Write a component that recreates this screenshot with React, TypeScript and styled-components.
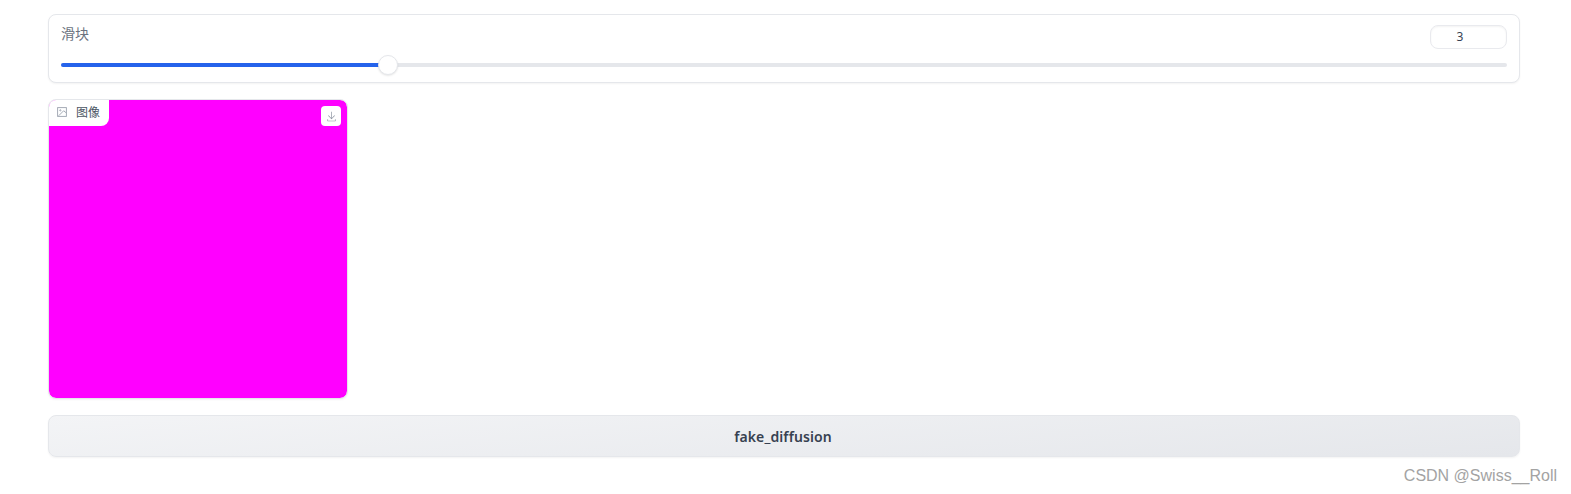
import styled, { createGlobalStyle } from "styled-components";

const GlobalStyle = createGlobalStyle`
    html, body {
        margin: 0;
        padding: 0;
        background: #ffffff;
    }
    body {
        font-family: "Noto Sans", "Noto Sans CJK SC", sans-serif;
    }
`;

function ImageIcon() {
    return (
        <svg width="10" height="10" viewBox="0 0 24 24" fill="none" stroke="#9ca3af" strokeWidth="2.2">
            <rect x="1.5" y="1.5" width="21" height="21" />
            <circle cx="8" cy="8" r="1.5" />
            <polyline points="22 14 16 9 4 21" />
        </svg>
    );
}

function DownloadIcon() {
    return (
        <svg width="11" height="11" viewBox="0 0 32 32" fill="#8b92a0">
            <path d="M26 24v4H6v-4H4v4a2 2 0 0 0 2 2h20a2 2 0 0 0 2-2v-4zm0-10l-1.41-1.41L17 20.17V2h-2v18.17l-7.59-7.58L6 14l10 10l10-10z" />
        </svg>
    );
}

export default function App() {
    const value = 3;
    const percent = 22.63;

    return (
        <Page>
            <GlobalStyle />
            <SliderPanel>
                <SliderHead>
                    <SliderLabel>滑块</SliderLabel>
                    <NumberBox>{value}</NumberBox>
                </SliderHead>
                <Track>
                    <TrackFill style={{ width: `${percent}%` }} />
                    <Thumb style={{ left: `${percent}%` }} />
                </Track>
            </SliderPanel>

            <ImagePanel>
                <ImageTag>
                    <ImageIcon />
                    <span>图像</span>
                </ImageTag>
                <DownloadButton>
                    <DownloadIcon />
                </DownloadButton>
            </ImagePanel>

            <RunButton>fake_diffusion</RunButton>
            <Watermark>CSDN @Swiss__Roll</Watermark>
        </Page>
    );
}

const Page = styled.div`
    position: relative;
    box-sizing: border-box;
    height: 494px;
    padding: 14px 51px 0 48px;
    display: flex;
    flex-direction: column;
    overflow: hidden;
`;

const SliderPanel = styled.div`
    box-sizing: border-box;
    height: 69px;
    padding: 10px 12px 0;
    border: 1px solid #e5e7eb;
    border-radius: 8px;
    box-shadow: 0 1px 2px rgba(0, 0, 0, 0.05);
    background: #ffffff;
`;

const SliderHead = styled.div`
    display: flex;
    justify-content: space-between;
    align-items: flex-start;
`;

const SliderLabel = styled.div`
    font-size: 14px;
    line-height: 18px;
    color: #6b7280;
`;

const NumberBox = styled.div`
    box-sizing: border-box;
    width: 77px;
    height: 24px;
    padding-right: 17px;
    border: 1px solid #e9eaee;
    border-radius: 8px;
    box-shadow: inset 0 1px 2px rgba(0, 0, 0, 0.05);
    font-size: 12px;
    line-height: 22px;
    text-align: center;
    color: #374151;
`;

const Track = styled.div`
    position: relative;
    height: 4px;
    margin-top: 14px;
    border-radius: 2px;
    background: #e5e7eb;
`;

const TrackFill = styled.div`
    height: 100%;
    border-radius: 2px;
    background: #2563eb;
`;

const Thumb = styled.div`
    position: absolute;
    top: -8px;
    box-sizing: border-box;
    width: 20px;
    height: 20px;
    margin-left: -10px;
    border: 1px solid #e5e7eb;
    border-radius: 50%;
    background: #ffffff;
    box-shadow: 0 1px 2px rgba(0, 0, 0, 0.1);
`;

const ImagePanel = styled.div`
    position: relative;
    box-sizing: border-box;
    width: 300px;
    height: 300px;
    margin-top: 16px;
    border: 1px solid #e5e7eb;
    border-radius: 8px;
    background: #ff00ff;
    background-clip: padding-box;
    box-shadow: 0 1px 2px rgba(0, 0, 0, 0.05);
    overflow: hidden;
`;

const ImageTag = styled.div`
    position: absolute;
    top: 0;
    left: 0;
    box-sizing: border-box;
    width: 60px;
    height: 26px;
    padding: 0 0 2px 8px;
    display: flex;
    align-items: center;
    gap: 9px;
    border-radius: 0 0 8px 0;
    background: #ffffff;
    font-size: 12px;
    color: #4b5563;
`;

const DownloadButton = styled.div`
    position: absolute;
    top: 6px;
    right: 6px;
    width: 20px;
    height: 20px;
    display: flex;
    align-items: center;
    justify-content: center;
    border-radius: 4px;
    background: #ffffff;
`;

const RunButton = styled.div`
    box-sizing: border-box;
    height: 42px;
    margin-top: 16px;
    padding-right: 2px;
    display: flex;
    align-items: center;
    justify-content: center;
    border: 1px solid #e5e7eb;
    border-radius: 8px;
    background: linear-gradient(175deg, #f3f4f6, #e5e7eb);
    box-shadow: 0 1px 2px rgba(0, 0, 0, 0.05);
    font-size: 14px;
    font-weight: 600;
    letter-spacing: 0.1px;
    color: #374151;
`;

const Watermark = styled.div`
    position: absolute;
    right: 14px;
    top: 467px;
    font-family: "Liberation Sans", Arial, sans-serif;
    font-size: 16px;
    line-height: 18px;
    color: #a3a3a3;
`;
